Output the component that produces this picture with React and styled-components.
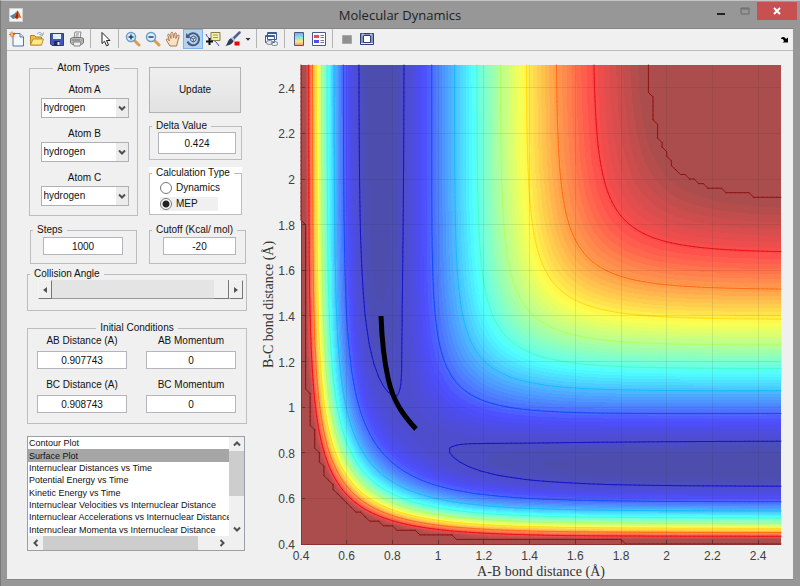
import React, { useState } from "react";
import styled, { createGlobalStyle } from "styled-components";

const GlobalStyle = createGlobalStyle`
  *, *::before, *::after { box-sizing: border-box; }
  body { margin: 0; background: #979797; }
  #root { min-height: 100vh; display: flex; }
  button, input, select { font: inherit; color: inherit; }
`;

/* ---------- potential energy surface ---------- */

const LOW = 0.4;
const HIGH = 2.5;
const STEP = 0.02;
const N = Math.round((HIGH - LOW) / STEP) + 1;
const CUTOFF = -20;
const WELL = 104;
const BETA = 1.982;
const R0 = 0.742;
const SATO = 0.424 * 0.424;
const K = (1 - SATO) / (1 + SATO);

function pair(r) {
  const e = Math.exp(-BETA * (r - R0));
  const singlet = WELL * (e * e - 2 * e);
  const triplet = 0.5 * WELL * (e * e + 2 * e);
  return [(singlet + K * triplet) / 2, (singlet - K * triplet) / 2];
}

function energy(ab, bc) {
  const [q1, a1] = pair(ab);
  const [q2, a2] = pair(bc);
  const [q3, a3] = pair(ab + bc);
  const spread = ((a1 - a2) ** 2 + (a2 - a3) ** 2 + (a3 - a1) ** 2) / 2;
  return Math.min(q1 + q2 + q3 - Math.sqrt(spread), CUTOFF);
}

const PLOT = { left: 48, top: 14, width: 480, height: 479 };
const px = (r) => PLOT.left + ((r - LOW) / (HIGH - LOW)) * PLOT.width;
const py = (r) => PLOT.top + PLOT.height - ((r - LOW) / (HIGH - LOW)) * PLOT.height;

const values = Array.from({ length: N }, (_, j) =>
  Array.from({ length: N }, (_, i) => energy(LOW + i * STEP, LOW + j * STEP))
);

const clamp = (i) => Math.max(0, Math.min(N - 1, i));
const valueAt = (i, j) => (i < 0 || j < 0 || i >= N || j >= N ? -1e9 : values[j][i]);

function crossing(i0, j0, i1, j1, level) {
  const a = valueAt(i0, j0);
  const b = valueAt(i1, j1);
  const t = (level - a) / (b - a);
  const x = clamp(i0) + (clamp(i1) - clamp(i0)) * t;
  const y = clamp(j0) + (clamp(j1) - clamp(j0)) * t;
  return [px(LOW + x * STEP).toFixed(1), py(LOW + y * STEP).toFixed(1)];
}

/* Oriented marching-squares edges: 0 bottom, 1 right, 2 top, 3 left. */
const CASES = {
  1: [[3, 0]], 2: [[0, 1]], 3: [[3, 1]], 4: [[1, 2]], 5: [[3, 0], [1, 2]],
  6: [[0, 2]], 7: [[3, 2]], 8: [[2, 3]], 9: [[2, 0]], 10: [[0, 1], [2, 3]],
  11: [[2, 1]], 12: [[1, 3]], 13: [[1, 0]], 14: [[0, 3]],
};

function cellEdge(i, j, side, level) {
  if (side === 0) return ["h" + i + "," + j, crossing(i, j, i + 1, j, level)];
  if (side === 1) return ["v" + (i + 1) + "," + j, crossing(i + 1, j, i + 1, j + 1, level)];
  if (side === 2) return ["h" + i + "," + (j + 1), crossing(i, j + 1, i + 1, j + 1, level)];
  return ["v" + i + "," + j, crossing(i, j, i, j + 1, level)];
}

function segments(level, pad) {
  const out = [];
  for (let j = -pad; j < N - 1 + pad; j++) {
    for (let i = -pad; i < N - 1 + pad; i++) {
      const code =
        (valueAt(i, j) >= level ? 1 : 0) +
        (valueAt(i + 1, j) >= level ? 2 : 0) +
        (valueAt(i + 1, j + 1) >= level ? 4 : 0) +
        (valueAt(i, j + 1) >= level ? 8 : 0);
      (CASES[code] || []).forEach(([from, to]) => {
        out.push([cellEdge(i, j, from, level), cellEdge(i, j, to, level)]);
      });
    }
  }
  return out;
}

function regionPath(level) {
  const next = new Map();
  segments(level, 1).forEach(([from, to]) => next.set(from[0], { point: from[1], to: to[0] }));
  let d = "";
  while (next.size) {
    let key = next.keys().next().value;
    const points = [];
    while (next.has(key)) {
      const node = next.get(key);
      next.delete(key);
      points.push(node.point.join(" "));
      key = node.to;
    }
    d += "M" + points.join("L") + "Z";
  }
  return d;
}

const linePath = (level) =>
  segments(level, 0).map(([a, b]) => "M" + a[1].join(" ") + "L" + b[1].join(" ")).join("");

function jet(t, alpha) {
  const ch = (c) => Math.max(0, Math.min(1, 1.5 - Math.abs(4 * t - c)));
  const mix = (v) => Math.round(255 * (v * alpha + 1 - alpha));
  return "rgb(" + [ch(3), ch(2), ch(1)].map(mix).join(",") + ")";
}

const LOWEST = Math.min(...values.flat());
const BANDS = 64;
const bands = Array.from({ length: BANDS - 1 }, (_, n) => {
  const t = (n + 1) / BANDS;
  return { d: regionPath(LOWEST + t * (CUTOFF - LOWEST)), color: jet((n + 1.5) / BANDS, 0.7) };
});
const contours = [-100, -90, -80, -70, -60, -50, -40, -30, -20].map((level) => {
  const t = (level - LOWEST) / (CUTOFF - LOWEST);
  return { d: linePath(level), color: level === CUTOFF ? "#8c1414" : jet(t + 0.02, 0.92) };
});
const ticks = [0.4, 0.6, 0.8, 1, 1.2, 1.4, 1.6, 1.8, 2, 2.2, 2.4];

const PlotSvg = styled.svg`
  display: block;
  width: 100%;
  height: auto;
`;
const TickText = styled.text`
  font: 12px "Liberation Sans", Arial, sans-serif;
  fill: #404040;
`;
const AxisText = styled.text`
  font: 14px "Liberation Serif", "Times New Roman", serif;
  fill: #333;
  text-anchor: middle;
`;

function EnergyPlot() {
  const right = PLOT.left + PLOT.width;
  const bottom = PLOT.top + PLOT.height;
  return (
    <PlotSvg viewBox="0 0 540 528" role="img" aria-label="Potential energy contour plot">
      <g shapeRendering="crispEdges">
        <rect x={PLOT.left} y={PLOT.top} width={PLOT.width} height={PLOT.height} fill={jet(0.01, 0.7)} />
        {bands.map((b, i) => <path key={i} d={b.d} fill={b.color} fillRule="evenodd" />)}
      </g>
      {contours.map((c, i) => <path key={i} d={c.d} fill="none" stroke={c.color} strokeLinecap="round" />)}
      <g stroke="#262626" shapeRendering="crispEdges">
        {ticks.map((t) => (
          <g key={t}>
            <path d={`M${px(t)} ${PLOT.top}V${bottom}M${PLOT.left} ${py(t)}H${right}`} strokeOpacity="0.1" />
            <path d={`M${px(t)} ${bottom}v-4M${PLOT.left} ${py(t)}h4`} strokeOpacity="0.55" />
          </g>
        ))}
        <path d={`M${PLOT.left} ${PLOT.top}V${bottom}H${right}`} fill="none" stroke="#8c3030" />
      </g>
      <path
        d="M128 265C129 291 131 309 135 327C140 351 151 365 163 378"
        fill="none" stroke="#000" strokeWidth="5"
      />
      {ticks.map((t) => (
        <g key={t}>
          <TickText x={px(t)} y={bottom + 16} textAnchor="middle">{t}</TickText>
          <TickText x={PLOT.left - 6} y={py(t) + 5} textAnchor="end">{t}</TickText>
        </g>
      ))}
      <AxisText x={PLOT.left + PLOT.width / 2} y={bottom + 32}>A-B bond distance (Å)</AxisText>
      <AxisText transform={`translate(20 ${PLOT.top + PLOT.height / 2}) rotate(-90)`}>B-C bond distance (Å)</AxisText>
    </PlotSvg>
  );
}

/* ---------- window frame ---------- */

const Window = styled.div`
  flex: 1;
  display: flex;
  flex-direction: column;
  min-width: 0;
  padding: 0 7px 6px 6px;
  background: #979797;
  border-top: 1px solid #c4c4c4;
  border-left: 1px solid #7a7a7a;
  font: 10px/12px "Liberation Sans", Arial, sans-serif;
  color: #111;
`;
const TitleBar = styled.header`
  display: grid;
  grid-template-columns: 1fr auto 1fr;
  height: 27px;
  align-items: center;
`;
const Title = styled.h1`
  margin: 0;
  font: 13px/20px "Open Sans", "Noto Sans", sans-serif;
  color: #222;
`;
const AppIcon = styled.svg`
  display: block;
  margin-left: 2px;
`;
const Caption = styled.div`
  display: flex;
  justify-content: flex-end;
  align-self: start;
  padding-top: 1px;
  margin-right: -4px;
`;
const CaptionButton = styled.button`
  display: grid;
  place-items: center;
  width: ${(p) => (p.$close ? 40 : 24)}px;
  height: 18px;
  padding: 0;
  border: 0;
  background: ${(p) => (p.$close ? "#c75050" : "transparent")};
`;
const Client = styled.main`
  flex: 1;
  background: #f0f0f0;
  border: 1px solid #868686;
  border-left: 0;
  border-right: 0;
`;

/* ---------- toolbar ---------- */

const Toolbar = styled.div`
  display: flex;
  align-items: flex-start;
  height: 22px;
  padding-right: 4px;
  border-bottom: 1px solid #bdbdbd;
`;
const Tool = styled.button`
  display: grid;
  place-items: center;
  flex: none;
  width: ${(p) => (p.$narrow ? 10 : 20)}px;
  height: 20px;
  margin: 0;
  padding: 0;
  border: 1px solid ${(p) => (p.$active ? "#7ab4ea" : "transparent")};
  background: ${(p) => (p.$active ? "#b5d3f0" : "transparent")};
`;
const Divider = styled.span`
  width: 1px;
  height: 19px;
  margin: 0 4px 0 3px;
  background: #b4b4b4;
`;
const Spacer = styled.span`
  flex: 1;
`;

const icons = {
  New: <><path d="M4 2.500h7l3.500 3.500v9H4z" fill="#f4f8ff" stroke="#5874a4" /><path d="M11 2.500V6h3.500" fill="#dbe7fa" stroke="#5874a4" /><path d="M3 .5v6M0 3.500h6M1 1.500l4 4M5 1.500l-4 4" stroke="#d56b3d" /><circle cx="3" cy="3.500" r="1" fill="#ffe08a" /></>,
  Open: <><path d="M1.500 14V4.500h4L7 6h5.500v8z" fill="#e9bd45" stroke="#b48424" /><path d="M1.500 14L4 8h10.500L12.500 14z" fill="#ffe88a" stroke="#be9230" /><path d="M8 3c2-2 4-2 5 .5m1.500-2l-1 3-3-1" fill="none" stroke="#8aa0b8" /></>,
  Save: <><path d="M1.500 2.500h13v12H3l-1.500-1.500z" fill="#4358b5" stroke="#303c85" /><path d="M4 3h8v5H4z" fill="#e5effa" /><path d="M5 10h6v5H5z" fill="#202c5f" /><path d="M8.500 11h2v3h-2z" fill="#eee" /></>,
  Print: <><path d="M5 7l1-6h6l-1 6z" fill="#fff" stroke="#878787" /><path d="M1.500 7.500l2-1h9l2 1V12l-2 1.500h-9l-2-1.500z" fill="#b9bab5" stroke="#777" /><path d="M4 11h8l-1 4H5z" fill="#efefef" stroke="#858585" /><path d="M7 3h3M6.500 5h3M3 9h8" stroke="#777" /><path d="M12 9h1.500" stroke="#67a94f" /></>,
  Pointer: <path d="M5 1.500v11l2.500-2.300 2 4.600 2-.8-2-4.500H13z" fill="#fff" stroke="#222" />,
  ZoomIn: <><path d="M9.500 9.500l4.500 4.500" stroke="#d99e54" strokeWidth="3" strokeLinecap="round" /><circle cx="6" cy="6" r="4.500" fill="#d9f0fc" stroke="#6d9cc4" strokeWidth="1.500" /><path d="M3.500 6h5M6 3.500v5" stroke="#233b6b" strokeWidth="1.500" /></>,
  ZoomOut: <><path d="M9.500 9.500l4.500 4.500" stroke="#d99e54" strokeWidth="3" strokeLinecap="round" /><circle cx="6" cy="6" r="4.500" fill="#d9f0fc" stroke="#6d9cc4" strokeWidth="1.500" /><path d="M3.500 6h5" stroke="#233b6b" strokeWidth="1.500" /></>,
  Pan: <path d="M5 15L1.500 9.500C.8 8.300 2 7.300 3 8.300L4.500 10 2.800 4.500C2.500 3 4 2.600 4.500 3.900L6 7.500 5.900 2.400c0-1.500 1.800-1.500 2 0L8.500 7l1-4.300c.4-1.400 2-1 1.800.4L10.800 7.500l1.700-3c.7-1.200 2-.4 1.600.8L12.500 11l-1 4z" fill="#fbe1c4" stroke="#a5784f" />,
  Rotate: <><path d="M3 5a6 6 0 1 1-.5 5.500" fill="none" stroke="#465b7e" strokeWidth="2" /><path d="M1 2v5h5z" fill="#465b7e" /><path d="M8.300 5l2.700 1.300v3L8.300 11 5.700 9.500v-3zM5.700 6.500L8.300 8 11 6.300M8.300 8v3" fill="#dce7f5" stroke="#465b7e" /></>,
  Cursor: <><path d="M1 3c2 7 8 3 13 12" fill="none" stroke="#4046e8" /><path d="M6 1.500h9v8H6z" fill="#f4efad" stroke="#85804b" /><path d="M8 4h5M8 6.500h5" stroke="#a09b65" /><path d="M4.500 7v7M1 10.500h7" stroke="#111" strokeWidth="2" /></>,
  Brush: <><path d="M14.500 1.500L8 8" stroke="#56618a" strokeWidth="2.500" strokeLinecap="round" /><path d="M9 9.500C7 14 4 14 .5 15 3 13 2.500 8 6.500 7z" fill="#313b5e" /><path d="M6.500 6.500L9.500 9.500" stroke="#b9c0d4" strokeWidth="2" /><path d="M9.500 10.500h5v4h-5z" fill="#f00000" /></>,
  Menu: <path d="M5.500 7h5L8 9.700z" fill="#333" />,
  Link: <><path d="M4.500 1.500h9v7h-9zM2.500 4.500h9v7h-9z" fill="#f4f8ff" stroke="#415b91" /><path d="M4.500 2.500h9M2.500 5.500h9" stroke="#415b91" /><rect x="3.500" y="9.500" width="6" height="4" rx="2" fill="#dce4ed" stroke="#75889e" /><rect x="8.500" y="10.500" width="6" height="4" rx="2" fill="none" stroke="#75889e" /></>,
  Colorbar: <><defs><linearGradient id="bar" x2="0" y2="1"><stop stopColor="#8c9af2" /><stop offset=".35" stopColor="#83e4e4" /><stop offset=".7" stopColor="#fae782" /><stop offset="1" stopColor="#fb8f80" /></linearGradient></defs><path d="M3.500 1.500h9v13h-9z" fill="url(#bar)" stroke="#495a82" /></>,
  Legend: <><path d="M1.500 1.500h13v13h-13z" fill="#fafcff" stroke="#495a82" /><path d="M3 4h5v3H3z" fill="#e94c4c" /><path d="M3 9h5v3H3z" fill="#504ce9" /><path d="M9.500 4.500H13M9.500 6.500H13M9.500 9.500H13M9.500 11.500H13" stroke="#7a7a7a" /></>,
  Hide: <path d="M3.500 4.500h9v8h-9z" fill="#909090" stroke="#a7a7a7" />,
  Show: <><path d="M1.500 2.500h13v11h-13z" fill="#8494bb" stroke="#2e416e" /><path d="M4.500 4.500h7v7h-7z" fill="#fff" stroke="#2e416e" /><path d="M4 2.500v2M12 2.500v2M2 12.500h12" stroke="#e5eafa" /></>,
  Dock: <path d="M5 7c2-2 4-1 5 1l2-1.500v5H6.500L8 10.200C7.500 8.500 6.500 7.500 5 8z" fill="#000" />,
};

function ToolButton({ name, active, narrow }) {
  return (
    <Tool type="button" aria-label={name} $active={active} $narrow={narrow}>
      <svg width={narrow ? 8 : 16} height="16" viewBox={narrow ? "4 0 8 16" : "0 0 16 16"} fill="none">{icons[name]}</svg>
    </Tool>
  );
}

/* ---------- controls ---------- */

const Body = styled.div`
  display: flex;
  align-items: flex-start;
`;
const Side = styled.form`
  flex: none;
  width: 246px;
  padding: 11px 6px 0 20px;
`;
const PlotPane = styled.section`
  flex: 1;
  min-width: 0;
`;
const Columns = styled.div`
  display: grid;
  grid-template-columns: 109px 93px;
  column-gap: 11px;
  padding-left: 2px;
`;
const Stack = styled.div`
  display: flex;
  flex-direction: column;
  gap: 7px;
  padding-top: 5px;
`;
const Pair = styled.div`
  display: grid;
  grid-template-columns: 107px 97px;
  column-gap: 12px;
  padding: 8px 0 4px 3px;
`;
const Group = styled.fieldset`
  min-width: 0;
  margin: 0;
  padding: 0;
  border: 1px solid #bdbdbd;
`;
const Inner = styled.div`
  padding: ${(p) => p.$pad};
`;
const Legend = styled.legend`
  margin: ${(p) => (p.$center ? "0 auto" : "0 0 0 2px")};
  padding: 0 4px;
  line-height: 12px;
  white-space: nowrap;
`;
const WhiteBack = styled.div`
  background: #fff;
`;
const Field = styled.label`
  display: block;
  text-align: center;
  line-height: 14px;
  & + & { margin-top: 9px; }
`;
const SelectBox = styled.span`
  display: grid;
  width: 88px;
  margin: 1px auto 0;
`;
const Select = styled.select`
  grid-area: 1 / 1;
  appearance: none;
  height: 20px;
  padding: 0 2px;
  border: 1px solid #b0b0b4;
  border-radius: 0;
  background: linear-gradient(90deg, #fff 74px, #ececec 74px);
`;
const SelectArrow = styled.svg`
  grid-area: 1 / 1;
  place-self: center end;
  margin-right: 3px;
  pointer-events: none;
`;
const TextBox = styled.input`
  display: block;
  width: 100%;
  height: ${(p) => (p.$tall ? 22 : 18)}px;
  padding: 0;
  border: 1px solid #b4b4ba;
  outline: 0;
  background: #fff;
  text-align: center;
`;
const Update = styled.button`
  width: 92px;
  height: 46px;
  border: 1px solid #b2b2b2;
  background: linear-gradient(#efefef, #e2e2e2);
`;
const Choice = styled.label`
  display: flex;
  align-items: center;
  gap: 4px;
  width: 58px;
  height: 14px;
  margin-bottom: 2px;
  background: ${(p) => (p.$shade ? "#f0f0f0" : "transparent")};
`;
const Radio = styled.input`
  appearance: none;
  flex: none;
  width: 12px;
  height: 12px;
  margin: 0;
  border: 1px solid #777;
  border-radius: 50%;
  background: #fff;
  &:checked { background: radial-gradient(circle, #222 0 3px, #fff 4px); }
`;
const Slider = styled.div`
  display: flex;
  height: 19px;
  background: #e4e4e4;
`;
const Nudge = styled.button`
  display: grid;
  place-items: center;
  width: 14px;
  padding: 0;
  border: 1px solid #f5f5f5;
  border-right-color: #777;
  border-bottom-color: #777;
  background: #f0f0f0;
`;
const Range = styled.input`
  appearance: none;
  flex: 1;
  min-width: 0;
  height: 19px;
  margin: 0;
  background: #e4e4e4;
  border-bottom: 1px solid #999;
  &::-webkit-slider-thumb {
    appearance: none;
    width: 15px;
    height: 19px;
    background: #f0f0f0;
    border-right: 1px solid #777;
    border-bottom: 1px solid #777;
  }
`;
const Initial = styled.div`
  padding-top: 11px;
`;
const Conditions = styled.div`
  display: grid;
  grid-template-columns: 90px 90px;
  gap: 10px 19px;
`;
const Condition = styled.label`
  display: grid;
  row-gap: 4px;
  text-align: center;
  line-height: 12px;
`;
const ListFrame = styled.div`
  display: grid;
  grid-template-columns: 1fr 15px;
  grid-template-rows: 99px 14px;
  width: 218px;
  margin-top: 12px;
  border: 1px solid #9a9ea8;
`;
const List = styled.ul`
  display: flex;
  flex-direction: column;
  min-width: 0;
  margin: 0;
  padding: 0;
  list-style: none;
  overflow: hidden;
  background: #fff;
  font-size: 9px;
`;
const Item = styled.li`
  display: flex;
  align-items: center;
  flex: 1;
  padding-left: 1px;
  white-space: nowrap;
  background: ${(p) => (p.$selected ? "#a6a6a6" : "transparent")};
`;
const Scroll = styled.div`
  display: flex;
  flex-direction: ${(p) => (p.$across ? "row" : "column")};
  justify-content: space-between;
  background: #f0f0f0;
`;
const ScrollButton = styled.button`
  display: grid;
  place-items: center;
  width: 15px;
  height: 14px;
  padding: 0;
  border: 0;
  background: transparent;
`;
const ScrollThumb = styled.span`
  width: ${(p) => (p.$across ? "155px" : "100%")};
  height: ${(p) => (p.$across ? "100%" : "45px")};
  margin: ${(p) => (p.$across ? "0 auto 0 0" : "0 0 auto")};
  background: #cdcdcd;
`;

const turns = { up: 180, down: 0, left: 90, right: -90 };
function Chevron({ to = "down" }) {
  return (
    <svg width="8" height="8" viewBox="0 0 8 8">
      <path d="M1 2.500l3 3 3-3" transform={`rotate(${turns[to]} 4 4)`} fill="none" stroke="#505050" strokeWidth="2" />
    </svg>
  );
}

function AtomSelect({ label }) {
  return (
    <Field>
      {label}
      <SelectBox>
        <Select defaultValue="hydrogen"><option>hydrogen</option></Select>
        <SelectArrow width="8" height="8" viewBox="0 0 8 8">
          <path d="M1 2.500l3 3 3-3" fill="none" stroke="#505050" strokeWidth="2" />
        </SelectArrow>
      </SelectBox>
    </Field>
  );
}

const plots = [
  "Contour Plot",
  "Surface Plot",
  "Internuclear Distances vs Time",
  "Potential Energy vs Time",
  "Kinetic Energy vs Time",
  "Internuclear Velocities vs Internuclear Distance",
  "Internuclear Accelerations vs Internuclear Distance",
  "Internuclear Momenta vs Internuclear Distance",
];
const conditions = [
  ["AB Distance (A)", "0.907743"],
  ["AB Momentum", "0"],
  ["BC Distance (A)", "0.908743"],
  ["BC Momentum", "0"],
];

const caretToEnd = (e) => {
  const end = e.target.value.length;
  e.target.setSelectionRange(end, end);
};

export default function App() {
  const [plot, setPlot] = useState("Surface Plot");
  return (
    <>
      <GlobalStyle />
      <Window>
        <TitleBar>
          <AppIcon width="14" height="14" viewBox="0 0 14 14">
            <path d="M.5.5h13v13H.5z" fill="#f5f5f5" stroke="#d2d2d2" />
            <path d="M1 8l4-2 3-3-2 7-2 1z" fill="#398aae" />
            <path d="M4 10.500C6 9 7 5 8.500 2.500c1.500 1 2.500 5 4.500 8C11 9 10 9 8 11.500 7 10 6 10 4 10.500z" fill="#d76125" />
            <path d="M8.500 2.500c0 3 1 5 0 8L6 10z" fill="#852b20" />
          </AppIcon>
          <Title>Molecular Dynamics</Title>
          <Caption>
            <CaptionButton type="button" aria-label="Minimize"><svg width="8" height="10"><path d="M0 7h8v2H0z" fill="#222" /></svg></CaptionButton>
            <CaptionButton type="button" aria-label="Maximize"><svg width="10" height="8"><path d="M1 1h8v6H1zM1 2h8" fill="none" stroke="#6b6b6b" /></svg></CaptionButton>
            <CaptionButton type="button" aria-label="Close" $close><svg width="8" height="8"><path d="M1 1l6 6M7 1L1 7" stroke="#fff" strokeWidth="2" /></svg></CaptionButton>
          </Caption>
        </TitleBar>
        <Client>
          <Toolbar role="toolbar">
            <ToolButton name="New" /><ToolButton name="Open" /><ToolButton name="Save" /><ToolButton name="Print" />
            <Divider />
            <ToolButton name="Pointer" />
            <Divider />
            <ToolButton name="ZoomIn" /><ToolButton name="ZoomOut" /><ToolButton name="Pan" />
            <ToolButton name="Rotate" active /><ToolButton name="Cursor" /><ToolButton name="Brush" /><ToolButton name="Menu" narrow />
            <Divider />
            <ToolButton name="Link" />
            <Divider />
            <ToolButton name="Colorbar" /><ToolButton name="Legend" />
            <Divider />
            <ToolButton name="Hide" /><ToolButton name="Show" />
            <Spacer />
            <ToolButton name="Dock" narrow />
          </Toolbar>
          <Body>
            <Side onSubmit={(e) => e.preventDefault()}>
              <Columns>
                <Group>
                  <Legend $center>Atom Types</Legend>
                  <Inner $pad="9px 6px 9px 8px">
                    <AtomSelect label="Atom A" />
                    <AtomSelect label="Atom B" />
                    <AtomSelect label="Atom C" />
                  </Inner>
                </Group>
                <Stack>
                  <Update type="submit">Update</Update>
                  <Group>
                    <Legend>Delta Value</Legend>
                    <Inner $pad="0 5px 5px 8px">
                      <TextBox $tall aria-label="Delta Value" defaultValue="0.424" />
                    </Inner>
                  </Group>
                  <WhiteBack>
                    <Group>
                      <Legend>Calculation Type</Legend>
                      <Inner $pad="2px 8px 1px 10px">
                        <Choice><Radio type="radio" name="type" />Dynamics</Choice>
                        <Choice $shade><Radio type="radio" name="type" defaultChecked />MEP</Choice>
                      </Inner>
                    </Group>
                  </WhiteBack>
                </Stack>
              </Columns>
              <Pair>
                <Group>
                  <Legend>Steps</Legend>
                  <Inner $pad="1px 13px 8px 12px">
                    <TextBox aria-label="Steps" defaultValue="1000" autoFocus onFocus={caretToEnd} />
                  </Inner>
                </Group>
                <Group>
                  <Legend>Cutoff (Kcal/ mol)</Legend>
                  <Inner $pad="1px 9px 8px 13px">
                    <TextBox aria-label="Cutoff" defaultValue="-20" />
                  </Inner>
                </Group>
              </Pair>
              <Group>
                <Legend>Collision Angle</Legend>
                <Inner $pad="0 3px 11px 10px">
                  <Slider>
                    <Nudge type="button" aria-label="Decrease angle"><svg width="6" height="8"><path d="M5 1v6L1 4z" fill="#555" /></svg></Nudge>
                    <Range type="range" aria-label="Collision Angle" min="0" max="180" defaultValue="180" />
                    <Nudge type="button" aria-label="Increase angle"><svg width="6" height="8"><path d="M1 1v6l4-3z" fill="#555" /></svg></Nudge>
                  </Slider>
                </Inner>
              </Group>
              <Initial>
                <Group>
                  <Legend $center>Initial Conditions</Legend>
                  <Inner $pad="1px 9px 10px">
                    <Conditions>
                      {conditions.map(([label, value]) => (
                        <Condition key={label}>{label}<TextBox defaultValue={value} /></Condition>
                      ))}
                    </Conditions>
                  </Inner>
                </Group>
              </Initial>
              <ListFrame>
                <List role="listbox" aria-label="Plot type">
                  {plots.map((p) => (
                    <Item key={p} role="option" aria-selected={p === plot} $selected={p === plot} onClick={() => setPlot(p)}>{p}</Item>
                  ))}
                </List>
                <Scroll>
                  <ScrollButton type="button" aria-label="Scroll up"><Chevron to="up" /></ScrollButton>
                  <ScrollThumb />
                  <ScrollButton type="button" aria-label="Scroll down"><Chevron /></ScrollButton>
                </Scroll>
                <Scroll $across>
                  <ScrollButton type="button" aria-label="Scroll left"><Chevron to="left" /></ScrollButton>
                  <ScrollThumb $across />
                  <ScrollButton type="button" aria-label="Scroll right"><Chevron to="right" /></ScrollButton>
                </Scroll>
                <Scroll />
              </ListFrame>
            </Side>
            <PlotPane><EnergyPlot /></PlotPane>
          </Body>
        </Client>
      </Window>
    </>
  );
}
